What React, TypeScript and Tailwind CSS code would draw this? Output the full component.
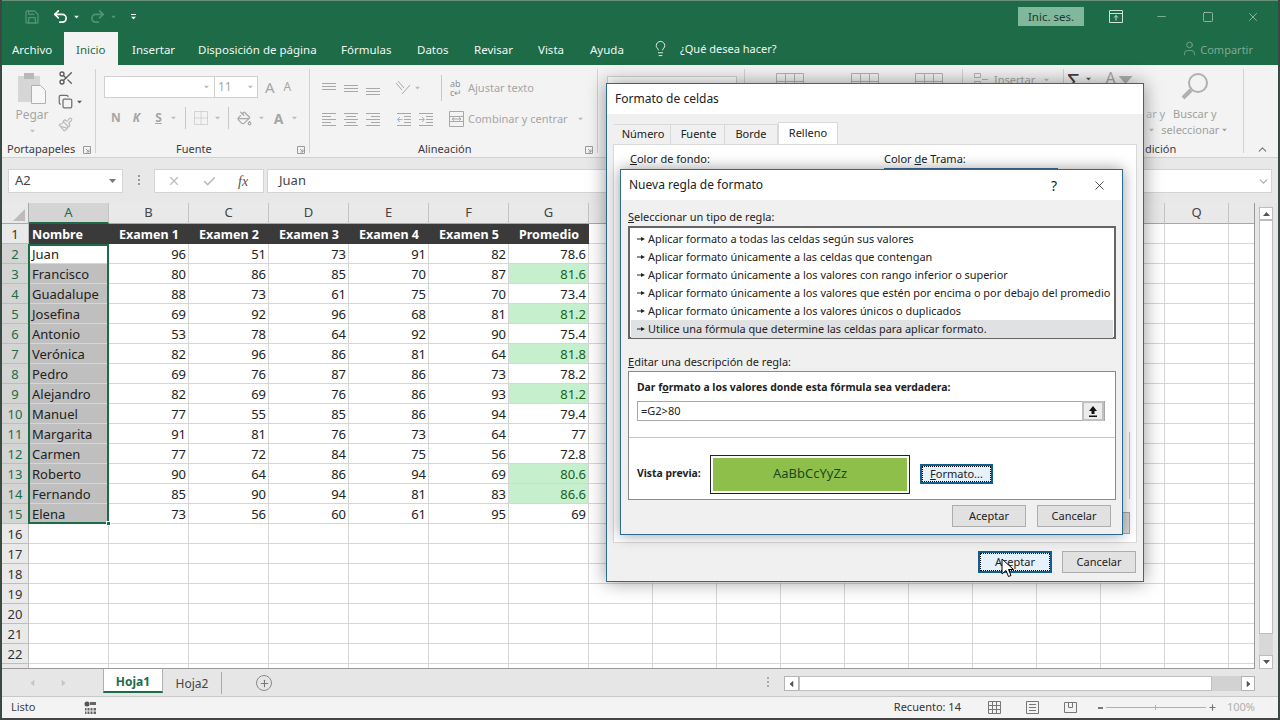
import { Scissors, Copy, Paintbrush, Lightbulb, User, Check, X, ChevronUp, ChevronDown, Plus, Undo2, Redo2, Save, Minus, Square, PaintBucket } from 'lucide-react'

const FONT = "font-['Noto_Sans','Liberation_Sans',sans-serif]"

// las columnas H a P quedan tapadas por los dialogos, sin letra
const COLS = [
  { label: 'A', w: 'w-[80px]' },
  { label: 'B', w: 'w-[80px]' },
  { label: 'C', w: 'w-[80px]' },
  { label: 'D', w: 'w-[80px]' },
  { label: 'E', w: 'w-[80px]' },
  { label: 'F', w: 'w-[80px]' },
  { label: 'G', w: 'w-[80px]' },
  { label: '', w: 'w-[64px]' },
  { label: '', w: 'w-[64px]' },
  { label: '', w: 'w-[64px]' },
  { label: '', w: 'w-[64px]' },
  { label: '', w: 'w-[64px]' },
  { label: '', w: 'w-[64px]' },
  { label: '', w: 'w-[64px]' },
  { label: '', w: 'w-[64px]' },
  { label: '', w: 'w-[64px]' },
  { label: 'Q', w: 'w-[64px]' },
  { label: '', w: 'w-[27px]' },
]

const HEADERS = ['Nombre', 'Examen 1', 'Examen 2', 'Examen 3', 'Examen 4', 'Examen 5', 'Promedio']

const DATA: (string | number)[][] = [
  ['Juan', 96, 51, 73, 91, 82, 78.6],
  ['Francisco', 80, 86, 85, 70, 87, 81.6],
  ['Guadalupe', 88, 73, 61, 75, 70, 73.4],
  ['Josefina', 69, 92, 96, 68, 81, 81.2],
  ['Antonio', 53, 78, 64, 92, 90, 75.4],
  ['Verónica', 82, 96, 86, 81, 64, 81.8],
  ['Pedro', 69, 76, 87, 86, 73, 78.2],
  ['Alejandro', 82, 69, 76, 86, 93, 81.2],
  ['Manuel', 77, 55, 85, 86, 94, 79.4],
  ['Margarita', 91, 81, 76, 73, 64, 77],
  ['Carmen', 77, 72, 84, 75, 56, 72.8],
  ['Roberto', 90, 64, 86, 94, 69, 80.6],
  ['Fernando', 85, 90, 94, 81, 83, 86.6],
  ['Elena', 73, 56, 60, 61, 95, 69],
]

const RULES = [
  'Aplicar formato a todas las celdas según sus valores',
  'Aplicar formato únicamente a las celdas que contengan',
  'Aplicar formato únicamente a los valores con rango inferior o superior',
  'Aplicar formato únicamente a los valores que estén por encima o por debajo del promedio',
  'Aplicar formato únicamente a los valores únicos o duplicados',
  'Utilice una fórmula que determine las celdas para aplicar formato.',
]

const TABS = [
  { label: 'Archivo', w: 'w-[62px] pl-[10px]' },
  { label: 'Inicio', w: 'w-[54px] pl-[12px] bg-[#f3f3f3] text-[#1e6b47] self-end h-[30px]' },
  { label: 'Insertar', w: 'w-[80px] pl-[14px]' },
  { label: 'Disposición de página', w: 'w-[143px]' },
  { label: 'Fórmulas', w: 'w-[76px]' },
  { label: 'Datos', w: 'w-[57px]' },
  { label: 'Revisar', w: 'w-[64px]' },
  { label: 'Vista', w: 'w-[52px]' },
  { label: 'Ayuda', w: 'w-[56px]' },
]

function Caret({ className = '' }: { className?: string }) {
  return (
    <svg width="7" height="4" viewBox="0 0 7 4" className={className}>
      <path d="M0 0h7L3.500 4z" fill="currentColor" />
    </svg>
  )
}

// tres rayitas de alineacion, como en la cinta
function Lines({ kind }: { kind: 'top' | 'mid' | 'bot' | 'left' | 'center' | 'right' }) {
  const rows = {
    top: [[1, 15, 3], [1, 15, 6], [1, 15, 9]],
    mid: [[1, 15, 5], [1, 15, 8], [1, 15, 11]],
    bot: [[1, 15, 8], [1, 15, 11], [1, 15, 14]],
    left: [[1, 15, 2], [1, 10, 5], [1, 15, 8], [1, 10, 11], [1, 15, 14]],
    center: [[1, 15, 2], [3, 13, 5], [1, 15, 8], [3, 13, 11], [1, 15, 14]],
    right: [[1, 15, 2], [6, 15, 5], [1, 15, 8], [6, 15, 11], [1, 15, 14]],
  }[kind]
  return (
    <svg width="16" height="16" viewBox="0 0 16 16" stroke="#a8a8a8" strokeWidth="1">
      {rows.map(([a, b, y]) => (
        <line key={y} x1={a} x2={b} y1={y + 0.5} y2={y + 0.5} />
      ))}
    </svg>
  )
}

function Indent({ flip }: { flip?: boolean }) {
  return (
    <svg width="16" height="16" viewBox="0 0 16 16" stroke="#a8a8a8" fill="none">
      <path d="M1 2.500h14M8 5.500h7M8 8.500h7M8 11.500h7M1 14.500h14" />
      <path d={flip ? 'M1 8.500h5M4 6l2.500 2.500L4 11' : 'M6.500 8.500h-5M4 6L1.500 8.500 4 11'} stroke="#9fb6cf" />
    </svg>
  )
}

function Launcher() {
  return (
    <svg width="8" height="8" viewBox="0 0 8 8" fill="none" stroke="#9a9a9a">
      <path d="M.5 7.500v-7h7v7zM3 3l3 3M6 3.500V6H3.500" />
    </svg>
  )
}

function VSep({ className = 'h-[22px]' }: { className?: string }) {
  return <div className={`w-px bg-[#c8c8c8] ${className}`} />
}

function TitleBar() {
  return (
    <div className="h-[32px] flex items-center border-t border-[#6a8f7c] bg-[#1e6b47] pl-[22px] pr-[18px]">
      <Save size={16} className="text-[#4f9473]" />
      <Undo2 size={17} strokeWidth={2.4} className="ml-[12px] text-white" />
      <Caret className="ml-[4px] text-[#dfeee7] scale-75" />
      <Redo2 size={17} strokeWidth={2.4} className="ml-[9px] text-[#4f9473]" />
      <Caret className="ml-[4px] text-[#4f9473] scale-75" />
      <div className="ml-[13px] flex flex-col items-center gap-[1px] text-white">
        <div className="w-[5px] h-px bg-white" />
        <Caret className="scale-75" />
      </div>
      <div className="ml-auto w-[66px] h-[19px] mr-[25px] bg-[#80b89c] text-[#21392d] text-[11.5px] flex items-center justify-center">
        Inic. ses.
      </div>
      <svg width="14" height="13" viewBox="0 0 14 13" fill="none" stroke="#cfe3d9" className="mr-[32px]">
        <path d="M.5.500h13v12H.5zM.5 3.500h13M7 10.500V5.500M5 7.500l2-2 2 2" />
      </svg>
      <Minus size={13} strokeWidth={1} className="mr-[34px] text-[#cfe3d9]" />
      <Square size={12} strokeWidth={1.2} className="mr-[32px] text-[#cfe3d9]" />
      <X size={14} strokeWidth={1} className="text-[#cfe3d9]" />
    </div>
  )
}

function TabsBar() {
  return (
    <div className="h-[33px] flex items-center bg-[#1e6b47] text-[11.5px] text-[#f1f7f4]">
      {TABS.map((t) => (
        <div key={t.label} className={`${t.w} h-full flex items-center pt-[2px]`}>
          {t.label}
        </div>
      ))}
      <Lightbulb size={17} strokeWidth={1.2} className="ml-[6px] text-white" />
      <span className="ml-[11px] text-[11px] pt-[2px]">¿Qué desea hacer?</span>
      <div className="ml-auto flex items-center pr-[25px] text-[#7ea893]">
        <User size={17} strokeWidth={1.2} />
        <span className="ml-[2px] text-[11px] pt-[3px]">Compartir</span>
      </div>
    </div>
  )
}

function GroupLabel({ text, className }: { text: string; className: string }) {
  return <div className={`h-[17px] flex items-center text-[11px] ${className}`}>{text}</div>
}

function Ribbon() {
  return (
    <div className="h-[93px] flex bg-[#f3f3f3] border-b border-[#d0d0d0] text-[#a6a6a6]">
      {/* Portapapeles */}
      <div className="w-[94px] pl-[5px] border-r border-[#d2d2d2] my-[4px] flex flex-col">
        <div className="h-[72px] shrink-0 flex">
          <div className="w-[46px] flex flex-col items-center pt-[4px] pl-[4px]">
            <svg width="29" height="31" viewBox="0 0 29 31">
              <rect x="0" y="3" width="22" height="26" fill="#d6d6d6" />
              <rect x="6" y="0" width="10" height="6" fill="#b8b8b8" />
              <path d="M13.500 12.500h9l5 5v13h-14z" fill="#f7f7f7" stroke="#b0b0b0" />
            </svg>
            <span className="text-[12px] mt-[2px]">Pegar</span>
            <Caret className="mt-[5px] scale-75 text-[#c0c0c0]" />
          </div>
          <div className="flex flex-col pt-[1px] gap-[8px]">
            <Scissors size={16} className="text-[#5c5c5c] ml-[5px]" />
            <div className="flex items-center">
              <Copy size={15} className="text-[#707070] ml-[5px]" />
              <Caret className="ml-[3px] scale-75 text-[#555]" />
            </div>
            <Paintbrush size={15} className="text-[#bcbcbc] ml-[5px]" />
          </div>
        </div>
        <div className="flex items-center justify-between pr-[4px] text-[#3c3c3c]">
          <GroupLabel text="Portapapeles" className="" />
          <Launcher />
        </div>
      </div>

      {/* Fuente */}
      <div className="w-[214px] pl-[8px] border-r border-[#d2d2d2] my-[4px] flex flex-col">
        <div className="h-[72px] shrink-0 flex flex-col">
          <div className="flex items-center mt-[7px] h-[22px]">
            <div className="w-[111px] h-[22px] bg-white border border-[#d0d0d0] flex items-center justify-end pr-[4px]">
              <Caret className="scale-75 text-[#bbb]" />
            </div>
            <div className="w-[43px] h-[22px] bg-white border-y border-r border-[#d0d0d0] flex items-center justify-between px-[3px] text-[12px]">
              11
              <Caret className="scale-75 text-[#bbb]" />
            </div>
            <span className="ml-[7px] text-[15px]">A</span>
            <span className="ml-[9px] text-[12px]">A</span>
          </div>
          <div className="flex items-center mt-[9px] h-[22px] text-[12px] font-bold">
            <span className="ml-[7px]">N</span>
            <span className="ml-[12px] italic">K</span>
            <span className="ml-[15px] underline">S</span>
            <Caret className="ml-[8px] scale-75 text-[#bbb]" />
            <VSep className="ml-[8px] h-[22px]" />
            <svg width="16" height="16" viewBox="0 0 16 16" className="ml-[7px]" fill="none" stroke="#b4b4b4" strokeDasharray="1 1">
              <path d="M1.500 1.500h13v13h-13zM8 1.500v13M1.500 8h13" />
            </svg>
            <Caret className="ml-[5px] scale-75 text-[#bbb]" />
            <VSep className="ml-[7px] h-[22px]" />
            <PaintBucket size={15} className="ml-[8px] text-[#a8a8a8]" />
            <Caret className="ml-[6px] scale-75 text-[#bbb]" />
            <span className="ml-[9px] text-[14px]">A</span>
            <Caret className="ml-[8px] scale-75 text-[#bbb]" />
          </div>
        </div>
        <div className="flex items-center pr-[4px] text-[#3c3c3c]">
          <GroupLabel text="Fuente" className="ml-[72px]" />
          <div className="ml-auto">
            <Launcher />
          </div>
        </div>
      </div>

      {/* Alineacion */}
      <div className="w-[288px] pl-[11px] border-r border-[#d2d2d2] my-[4px] flex flex-col">
        <div className="h-[72px] shrink-0 flex flex-col">
          <div className="flex items-center mt-[8px] h-[22px]">
            <div className="flex gap-[6px]">
              <Lines kind="top" />
              <Lines kind="mid" />
              <Lines kind="bot" />
            </div>
            <VSep className="ml-[6px]" />
            <svg width="18" height="18" viewBox="0 0 18 18" className="ml-[6px]" fill="none" stroke="#a8a8a8">
              <path d="M2 4l6 7M4 2l6 7M8 15l8-9" />
            </svg>
            <Caret className="ml-[2px] scale-75 text-[#bbb]" />
            <VSep className="ml-[20px] h-[26px]" />
            <span className="ml-[8px] w-[15px] text-[9px] leading-[9px] text-[#909090]">ab c↵</span>
            <span className="ml-[3px] text-[11px]">Ajustar texto</span>
          </div>
          <div className="flex items-center mt-[9px] h-[22px]">
            <div className="flex gap-[6px]">
              <Lines kind="left" />
              <Lines kind="center" />
              <Lines kind="right" />
            </div>
            <VSep className="ml-[6px]" />
            <div className="ml-[8px] flex gap-[6px]">
              <Indent />
              <Indent flip />
            </div>
            <VSep className="ml-[7px]" />
            <svg width="15" height="16" viewBox="0 0 15 16" className="ml-[7px]" fill="none" stroke="#a8a8a8">
              <path d="M.5.500h14v15H.5zM.5 5.500h14M.5 10.500h14M3 8h9M3 8l2-1.500M3 8l2 1.500M12 8l-2-1.500M12 8l-2 1.500" />
            </svg>
            <span className="ml-[4px] text-[11px]">Combinar y centrar</span>
            <Caret className="ml-[9px] scale-75 text-[#bbb]" />
          </div>
        </div>
        <div className="flex items-center pr-[4px] text-[#3c3c3c]">
          <GroupLabel text="Alineación" className="ml-[97px]" />
          <div className="ml-auto">
            <Launcher />
          </div>
        </div>
      </div>

      {/* Numero, oculto casi todo por el dialogo */}
      <div className="w-[147px] pl-[9px] border-r border-[#d2d2d2] my-[4px]">
        <div className="w-[130px] h-[22px] mt-[7px] bg-white border border-[#d0d0d0]" />
      </div>

      {/* Estilos */}
      <div className="w-[218px] border-r border-[#d2d2d2] my-[4px] flex pl-[31px] pt-[4px]">
        {['', 'ml-[47px]', 'ml-[36px]'].map((m) => (
          <svg key={m} width="28" height="24" viewBox="0 0 28 24" fill="none" stroke="#b4b4b4" className={m}>
            <path d="M.5.500h27v23H.5zM.5 8.500h27M9.500.500v23M18.500.500v23" />
          </svg>
        ))}
      </div>

      {/* Celdas */}
      <div className="w-[101px] border-r border-[#d2d2d2] my-[4px] pl-[11px] pt-[3px] flex items-start text-[11px]">
        <svg width="15" height="13" viewBox="0 0 15 13" fill="none" stroke="#b4b4b4" className="mt-[1px]">
          <path d="M.5.500h6v4h-6zM.5 8.500h6v4h-6zM8 6.500h6" />
        </svg>
        <span className="ml-[5px]">Insertar</span>
        <Caret className="ml-[8px] mt-[6px] scale-75 text-[#bbb]" />
      </div>

      {/* Edicion */}
      <div className="w-[180px] border-r border-[#d2d2d2] my-[4px] flex">
        <div className="w-[86px] flex pt-[1px]">
          <span className="text-[22px] leading-none text-[#404040] ml-[3px]">Σ</span>
          <Caret className="ml-[5px] mt-[7px] scale-75 text-[#555]" />
          <span className="ml-[14px] text-[16px] leading-none">A</span>
          <Caret className="ml-[6px] mt-[8px] scale-[2] text-[#b0b0b0]" />
        </div>
        <div className="w-[100px] flex flex-col items-center text-[11px] leading-[16px] pt-[4px] text-[#a0a0a0]">
          <svg width="28" height="27" viewBox="0 0 28 27" fill="none" stroke="#b0b0b0">
            <circle cx="17" cy="10" r="9" strokeWidth="2" />
            <path d="M10 17L2 25" strokeWidth="4" />
          </svg>
          <span className="mt-[6px]">Buscar y</span>
          <span className="flex items-center">
            seleccionar
            <Caret className="ml-[2px] scale-75" />
          </span>
        </div>
      </div>
    </div>
  )
}

function FormulaBar() {
  return (
    <div className="h-[45px] flex items-start bg-[#e8e8e8] pl-[6px] pr-[6px] pt-[11px] text-[13px] text-[#444]">
      <div className="w-[115px] h-[24px] bg-white border border-[#d4d4d4] flex items-center justify-between px-[6px]">
        A2
        <Caret className="text-[#777]" />
      </div>
      <div className="w-[31px] flex flex-col items-center gap-[2px] pt-[6px]">
        <div className="w-[2px] h-[2px] bg-[#999]" />
        <div className="w-[2px] h-[2px] bg-[#999]" />
        <div className="w-[2px] h-[2px] bg-[#999]" />
      </div>
      <div className="w-[110px] h-[24px] bg-white border border-[#d4d4d4] flex items-center pl-[12px]">
        <X size={14} className="text-[#bdbdbd]" />
        <Check size={15} strokeWidth={2.6} className="ml-[21px] text-[#bdbdbd]" />
        <span className="ml-[21px] font-['Liberation_Serif',serif] italic text-[14px] text-[#555]">fx</span>
      </div>
      <div className="ml-[3px] flex-1 h-[24px] bg-white border border-[#d4d4d4] flex items-center pl-[11px]">
        Juan
        <ChevronDown size={13} className="ml-auto mr-[1px] text-[#a8a8a8]" />
      </div>
    </div>
  )
}

function ColHeaderRow() {
  return (
    <div className="h-[21px] flex">
      <div className="w-[27px] shrink-0 border-r border-b border-[#a8a8a8] bg-[#e9e9e9] flex items-end justify-end">
        <svg width="12" height="12" viewBox="0 0 12 12" className="mr-[3px] mb-[2px]">
          <path d="M12 0v12H0z" fill="#bcbcbc" />
        </svg>
      </div>
      {COLS.map((c, i) => (
        <div
          key={i}
          className={`${c.w} shrink-0 flex items-center justify-center text-[13px] border-r border-[#c4c4c4] ${
            i === 0 ? 'bg-[#d4d4d4] border-b-2 border-b-[#1e6b47] text-[#1e6b47]' : 'bg-[#e9e9e9] border-b border-b-[#a8a8a8] text-[#444]'
          }`}
        >
          {c.label}
        </div>
      ))}
    </div>
  )
}

function SheetRow({ n }: { n: number }) {
  const rec = n === 1 ? HEADERS : DATA[n - 2]
  const selected = n >= 2 && n <= 15
  return (
    <div className="h-[20px] flex shrink-0">
      <div
        className={`w-[27px] shrink-0 flex items-center justify-center pt-[3px] text-[13px] border-r border-b border-[#bdbdbd] ${
          selected ? 'bg-[#d4d4d4] text-[#1e6b47]' : 'bg-[#e9e9e9] text-[#333]'
        }`}
      >
        {n < 23 ? n : ''}
      </div>
      {COLS.map((c, i) => {
        const v = rec && i < rec.length ? rec[i] : ''
        let cls = 'border-r border-b border-[#d6d6d6] bg-white text-[#222]'
        if (n === 1 && i < 7) {
          cls = `bg-[#3a3a3a] text-white font-bold text-[12.5px] ${i === 0 ? 'justify-start pl-[3px]' : 'justify-center'}`
        } else if (rec && i === 0) {
          cls = `border-r border-b border-[#d6d6d6] justify-start pl-[3px] text-[13px] text-[#222] ${n === 2 ? 'bg-white' : 'bg-[#bfbfbf]'}`
        } else if (rec && i > 0 && i < 7) {
          const hot = i === 6 && Number(v) > 80
          cls = `border-r border-b border-[#d6d6d6] justify-end pr-[2px] text-[13px] ${hot ? 'bg-[#c6efce] text-[#17621f]' : 'bg-white text-[#222]'}`
        }
        return (
          <div key={i} className={`${c.w} shrink-0 flex items-center pt-[3px] ${cls}`}>
            {v}
          </div>
        )
      })}
    </div>
  )
}

function Grid() {
  const rows = Array.from({ length: 23 }, (_, i) => i + 1)
  return (
    <div className="h-[466px] flex">
      <div className="w-[1253px] relative overflow-hidden border-b border-r border-[#9a9a9a]">
        <ColHeaderRow />
        {rows.map((n) => (
          <SheetRow key={n} n={n} />
        ))}
        {/* seleccion A2:A15 */}
        <div className="absolute left-[26px] top-[41px] w-[81px] h-[280px] border-2 border-[#1e6b47] pointer-events-none" />
        <div className="absolute left-[104px] top-[318px] w-[5px] h-[5px] bg-[#1e6b47] border border-white" />
      </div>
      <div className="ml-[4px] w-[14px] mt-[4px] flex flex-col bg-[#d8d8d8]">
        <div className="h-[13px] shrink-0 bg-white border border-[#bdbdbd] flex items-center justify-center">
          <Caret className="rotate-180 text-[#555]" />
        </div>
        <div className="h-[414px] shrink-0 bg-white border border-[#bdbdbd]" />
        <div className="mt-auto h-[14px] shrink-0 bg-white border border-[#bdbdbd] flex items-center justify-center">
          <Caret className="text-[#555]" />
        </div>
      </div>
    </div>
  )
}

function SheetTabs() {
  return (
    <div className="h-[28px] flex bg-[#e6e6e6] border-b border-[#c8c8c8] text-[12px] text-[#444]">
      <div className="w-[101px] flex items-center gap-[24px] pl-[27px] text-[#c4c4c4]">
        <Caret className="rotate-90" />
        <Caret className="-rotate-90" />
      </div>
      <div className="w-[60px] h-[24px] pt-[4px] bg-white border-x border-[#b0b0b0] border-b-2 border-b-[#1e6b47] flex items-center justify-center font-bold text-[#1e6b47]">
        Hoja1
      </div>
      <div className="w-[59px] h-[22px] mt-[3px] pt-[2px] flex items-center justify-center border-r border-[#a8a8a8]">Hoja2</div>
      <div className="ml-[34px] mt-[6px] w-[16px] h-[16px] rounded-full border border-[#8a8a8a] flex items-center justify-center">
        <Plus size={11} strokeWidth={2.4} className="text-[#777]" />
      </div>
      <div className="ml-auto mr-[23px] flex items-start pt-[7px]">
        <div className="flex flex-col gap-[2px] mr-[15px] pt-[1px]">
          <div className="w-[2px] h-[2px] bg-[#aaa]" />
          <div className="w-[2px] h-[2px] bg-[#aaa]" />
          <div className="w-[2px] h-[2px] bg-[#aaa]" />
        </div>
        <div className="h-[15px] flex w-[471px] bg-[#d2d2d2]">
          <div className="w-[15px] bg-white border border-[#b4b4b4] flex items-center justify-center">
            <Caret className="rotate-90 text-[#555]" />
          </div>
          <div className="w-[413px] bg-white border border-[#c0c0c0]" />
          <div className="ml-auto w-[14px] bg-white border border-[#b4b4b4] flex items-center justify-center">
            <Caret className="-rotate-90 text-[#555]" />
          </div>
        </div>
      </div>
    </div>
  )
}

function StatusBar() {
  return (
    <div className="h-[21px] flex items-center bg-[#f3f3f3] text-[11px] text-[#444] pl-[9px] pr-[23px]">
      Listo
      <svg width="13" height="13" viewBox="0 0 13 13" className="ml-[48px]">
        <circle cx="3" cy="3" r="2.500" fill="#555" />
        <path d="M1 7h11v6H1zM6 1h6v3H6z" fill="#666" />
        <path d="M3 7v6M6 7v6M9 7v6M1 10h11" stroke="#f3f3f3" />
      </svg>
      <span className="ml-auto text-[#333]">Recuento: 14</span>
      <svg width="13" height="13" viewBox="0 0 13 13" className="ml-[27px]" fill="none" stroke="#777">
        <path d="M.5.500h12v12H.5zM4.500.500v12M8.500.500v12M.5 4.500h12M.5 8.500h12" />
      </svg>
      <svg width="13" height="13" viewBox="0 0 13 13" className="ml-[25px]" fill="none" stroke="#777">
        <path d="M.5.500h12v12H.5zM3 3.500h7M3 6.500h7M3 9.500h7" />
      </svg>
      <svg width="13" height="11" viewBox="0 0 13 11" className="ml-[25px]" fill="none" stroke="#777">
        <path d="M.5.500h12v10H.5zM4.500.500v5h4v-5" />
      </svg>
      <div className="ml-[21px] w-[5px] h-[2px] bg-[#777]" />
      <div className="ml-[3px] w-[100px] h-px bg-[#b0b0b0] flex items-center justify-center">
        <div className="w-px h-[5px] bg-[#b0b0b0]" />
      </div>
      <Plus size={9} strokeWidth={3} className="ml-[2px] text-[#777]" />
      <span className="ml-[10px] text-[#b0b0b0]">100%</span>
    </div>
  )
}

function DlgButton({ children, className = '' }: { children: React.ReactNode; className?: string }) {
  return (
    <div className={`w-[74px] h-[22px] bg-[#e1e1e1] border border-[#adadad] flex items-center justify-center text-[11px] text-[#222] ${className}`}>
      {children}
    </div>
  )
}

function FormatCellsDialog() {
  return (
    <div className="absolute left-[606px] top-[83px] w-[538px] h-[499px] bg-[#f0f0f0] border border-[#2b6a94] shadow-[0_0_18px_rgba(0,0,0,0.4)] flex flex-col text-[11px] text-[#222]">
      <div className="h-[30px] bg-white flex items-center pl-[8px] text-[12px]">Formato de celdas</div>
      <div className="h-[30px] flex items-end pl-[7px]">
        {[
          ['Número', 'w-[57px] pl-[2px]'],
          ['Fuente', 'w-[54px] pl-[2px]'],
          ['Borde', 'w-[53px]'],
        ].map(([t, w]) => (
          <div key={t} className={`${w} h-[20px] bg-[#f0f0f0] border-t border-r border-[#d9d9d9] flex items-center justify-center`}>
            {t}
          </div>
        ))}
        <div className="w-[60px] h-[22px] bg-white border-x border-t border-[#d9d9d9] flex items-center justify-center">Relleno</div>
      </div>
      <div className="mx-[6px] h-[399px] bg-white border border-[#d9d9d9] pt-[6px] pl-[16px] flex relative">
        <span>
          <u>C</u>olor de fondo:
        </span>
        <div className="ml-[174px] flex flex-col">
          <span>
            Color <u>d</u>e Trama:
          </span>
          <div className="w-[174px] h-[2px] bg-[#3f6f9c]" />
        </div>
        <div className="absolute right-[6px] top-[287px] h-[67px] w-px bg-[#c8c8c8]" />
        <div className="absolute right-[6px] top-[367px] h-[22px] w-[8px] bg-[#d8d8d8] border-r border-y border-[#a8a8a8]" />
      </div>
      <div className="flex justify-end gap-[10px] pr-[7px] mt-[8px]">
        <DlgButton className="!bg-[#e5f1fb] !border-2 !border-[#0f5f8f] outline-1 outline-dotted outline-black -outline-offset-3">Aceptar</DlgButton>
        <DlgButton>Cancelar</DlgButton>
      </div>
    </div>
  )
}

function NewRuleDialog() {
  return (
    <div className="absolute left-[620px] top-[169px] w-[503px] h-[366px] bg-[#f0f0f0] border border-[#2b6a94] shadow-[0_0_14px_rgba(0,0,0,0.4)] flex flex-col text-[11px] text-[#222]">
      <div className="h-[30px] shrink-0 bg-white flex items-center pl-[8px] text-[12px]">
        Nueva regla de formato
        <span className="ml-auto text-[14px] mr-[35px]">?</span>
        <X size={15} strokeWidth={1.2} className="mr-[15px]" />
      </div>
      <div className="pl-[7px] pr-[6px] flex flex-col flex-1">
        <div className="h-[26px] flex items-end pb-[1px]">
          <span>
            <u>S</u>eleccionar un tipo de regla:
          </span>
        </div>
        <div className="h-[113px] bg-white border-2 border-[#666] px-[1px] pt-[2px] text-[10.9px]">
          {RULES.map((r, i) => (
            <div key={r} className={`h-[18px] flex items-center pl-[6px] whitespace-nowrap ${i === 5 ? 'bg-[#dfe1e3]' : ''}`}>
              <svg width="8" height="6" viewBox="0 0 8 6" className="mr-[3px] shrink-0">
                <path d="M0 2.500h4V1l4 2-4 2V3.500H0z" fill="#222" />
              </svg>
              {r}
            </div>
          ))}
        </div>
        <div className="h-[32px] flex items-end pb-[1px]">
          <span>
            <u>E</u>ditar una descripción de regla:
          </span>
        </div>
        <div className="h-[129px] bg-white border border-[#8a8a8a] flex flex-col">
          <div className="h-[29px] flex items-center pl-[8px] pt-[2px] font-bold text-[10.4px]">
            <span>
              Dar f<u>o</u>rmato a los valores donde esta fórmula sea verdadera:
            </span>
          </div>
          <div className="ml-[8px] mr-[10px] h-[20px] bg-white border border-[#a8a8a8] flex items-center pl-[3px]">
            =G2&gt;80
            <div className="ml-auto w-[22px] h-[20px] bg-[#ececec] border-2 border-[#c0c0c0] flex items-center justify-center">
              <svg width="10" height="11" viewBox="0 0 10 11">
                <path d="M5 0l4 5H6.500v3h-3V5H1zM1 9.500h8V11H1z" fill="#111" />
              </svg>
            </div>
          </div>
          <div className="mt-[16px] h-px bg-[#c8c8c8]" />
          <div className="flex-1 flex items-center pl-[8px] pt-[11px]">
            <span className="font-bold w-[73px] text-[10.4px]">Vista previa:</span>
            <div className="w-[200px] h-[39px] border border-[#222] p-[2px] bg-white">
              <div className="h-full bg-[#8fbf4b] flex items-center justify-center text-[13px] text-[#1b4a1f]">AaBbCcYyZz</div>
            </div>
            <div className="ml-[10px] w-[73px] h-[20px] bg-[#e5f1fb] border-2 border-[#0f5f8f] outline-1 outline-dotted outline-black -outline-offset-3 flex items-center justify-center">
              <span>
                <u>F</u>ormato...
              </span>
            </div>
          </div>
        </div>
        <div className="flex justify-end gap-[11px] pr-[5px] mt-[5px]">
          <DlgButton>Aceptar</DlgButton>
          <DlgButton>Cancelar</DlgButton>
        </div>
      </div>
    </div>
  )
}

export default function App() {
  return (
    <div className={`relative w-[1280px] h-[720px] overflow-hidden bg-[#e6e6e6] ${FONT}`}>
      <div className="h-full border-l-2 border-r-2 border-b-2 border-l-[#3a4a42] border-r-[#3a4a42] border-b-[#444] flex flex-col">
        <TitleBar />
        <TabsBar />
        <Ribbon />
        <FormulaBar />
        <Grid />
        <SheetTabs />
        <StatusBar />
      </div>
      <FormatCellsDialog />
      <NewRuleDialog />
      <div className="absolute left-[1146px] top-[106px] text-[11px] text-[#a6a6a6]">ar y</div>
      <Caret className="absolute left-[1148px] top-[128px] scale-75 text-[#a6a6a6]" />
      <div className="absolute left-[1145px] top-[141px] text-[11px] text-[#3c3c3c]">dición</div>
      <ChevronUp size={13} className="absolute left-[1256px] top-[143px] text-[#777]" />
      <svg width="15" height="20" viewBox="0 0 15 20" className="absolute left-[1001px] top-[558px]">
        <path d="M1 1v15l4-3.500 2.500 6 2.500-1-2.500-6h5z" fill="#fff" stroke="#000" strokeWidth="1" />
      </svg>
    </div>
  )
}
